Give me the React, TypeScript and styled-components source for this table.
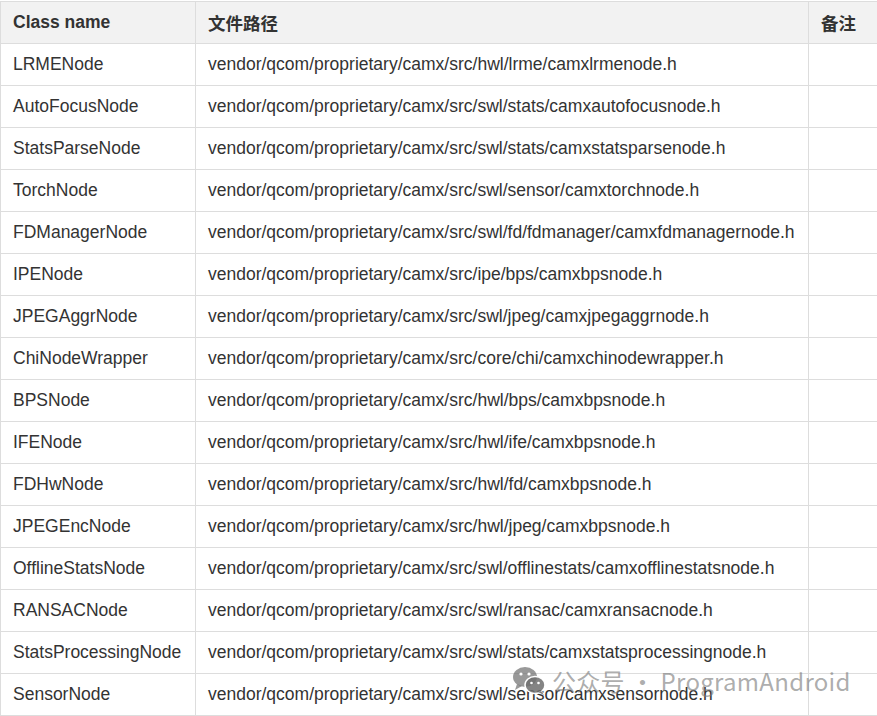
import styled, { createGlobalStyle } from "styled-components";

const GlobalStyle = createGlobalStyle`
  html, body {
    margin: 0;
    padding: 0;
    background: #ffffff;
  }
  body {
    font-family: "Liberation Sans", Arial, "Noto Sans CJK SC", sans-serif;
    color: #333333;
  }
`;

const Page = styled.div`
  position: relative;
  width: 877px;
  padding-top: 1px;
`;

const Table = styled.table`
  border-collapse: collapse;
  width: 877px;
  table-layout: fixed;
  font-size: 17.5px;
`;

const HeadCell = styled.th<{ width: number }>`
  width: ${(p) => p.width}px;
  height: 42px;
  box-sizing: border-box;
  padding: 0 12px;
  background: #f2f2f2;
  border: 1px solid #dddddd;
  text-align: left;
  font-weight: bold;
  font-size: 17.5px;
  color: #333333;
  font-family: "Liberation Sans", Arial, "Noto Sans CJK SC", sans-serif;
`;

const Cell = styled.td`
  height: 42px;
  box-sizing: border-box;
  padding: 0 12px;
  border: 1px solid #dddddd;
  white-space: nowrap;
  color: #333333;
`;

const Watermark = styled.div`
  position: absolute;
  left: 512px;
  top: 663px;
  display: flex;
  align-items: center;
  gap: 6px;
  color: rgba(120, 120, 120, 0.62);
  font-size: 24px;
  font-family: "Noto Sans CJK SC", "Noto Sans", sans-serif;
  letter-spacing: 0.3px;
  pointer-events: none;
`;

const rows: [string, string][] = [
  ["LRMENode", "vendor/qcom/proprietary/camx/src/hwl/lrme/camxlrmenode.h"],
  ["AutoFocusNode", "vendor/qcom/proprietary/camx/src/swl/stats/camxautofocusnode.h"],
  ["StatsParseNode", "vendor/qcom/proprietary/camx/src/swl/stats/camxstatsparsenode.h"],
  ["TorchNode", "vendor/qcom/proprietary/camx/src/swl/sensor/camxtorchnode.h"],
  ["FDManagerNode", "vendor/qcom/proprietary/camx/src/swl/fd/fdmanager/camxfdmanagernode.h"],
  ["IPENode", "vendor/qcom/proprietary/camx/src/ipe/bps/camxbpsnode.h"],
  ["JPEGAggrNode", "vendor/qcom/proprietary/camx/src/swl/jpeg/camxjpegaggrnode.h"],
  ["ChiNodeWrapper", "vendor/qcom/proprietary/camx/src/core/chi/camxchinodewrapper.h"],
  ["BPSNode", "vendor/qcom/proprietary/camx/src/hwl/bps/camxbpsnode.h"],
  ["IFENode", "vendor/qcom/proprietary/camx/src/hwl/ife/camxbpsnode.h"],
  ["FDHwNode", "vendor/qcom/proprietary/camx/src/hwl/fd/camxbpsnode.h"],
  ["JPEGEncNode", "vendor/qcom/proprietary/camx/src/hwl/jpeg/camxbpsnode.h"],
  ["OfflineStatsNode", "vendor/qcom/proprietary/camx/src/swl/offlinestats/camxofflinestatsnode.h"],
  ["RANSACNode", "vendor/qcom/proprietary/camx/src/swl/ransac/camxransacnode.h"],
  ["StatsProcessingNode", "vendor/qcom/proprietary/camx/src/swl/stats/camxstatsprocessingnode.h"],
  ["SensorNode", "vendor/qcom/proprietary/camx/src/swl/sensor/camxsensornode.h"],
];

const WeChatIcon = () => (
  <svg width="34" height="30" viewBox="0 0 34 30">
    <g fill="rgba(110,110,110,0.7)">
      <ellipse cx="13" cy="11" rx="12" ry="10" />
      <path d="M5 18 L3 24 L10 20 Z" />
    </g>
    <g fill="rgba(110,110,110,0.85)" stroke="#ffffff" strokeWidth="1.5">
      <ellipse cx="23" cy="19" rx="10" ry="8.5" />
    </g>
    <path d="M29 25 L32 29 L26 26 Z" fill="rgba(110,110,110,0.85)" />
    <g fill="#ffffff">
      <circle cx="9" cy="8" r="1.6" />
      <circle cx="17" cy="8" r="1.6" />
      <circle cx="19.5" cy="17" r="1.3" />
      <circle cx="26.5" cy="17" r="1.3" />
    </g>
  </svg>
);

export default function App() {
  return (
    <Page>
      <GlobalStyle />
      <Table>
        <thead>
          <tr>
            <HeadCell width={195}>Class name</HeadCell>
            <HeadCell width={613}>文件路径</HeadCell>
            <HeadCell width={69}>备注</HeadCell>
          </tr>
        </thead>
        <tbody>
          {rows.map(([name, path]) => (
            <tr key={name}>
              <Cell>{name}</Cell>
              <Cell>{path}</Cell>
              <Cell />
            </tr>
          ))}
        </tbody>
      </Table>
      <Watermark>
        <WeChatIcon />
        <span>公众号 · ProgramAndroid</span>
      </Watermark>
    </Page>
  );
}
